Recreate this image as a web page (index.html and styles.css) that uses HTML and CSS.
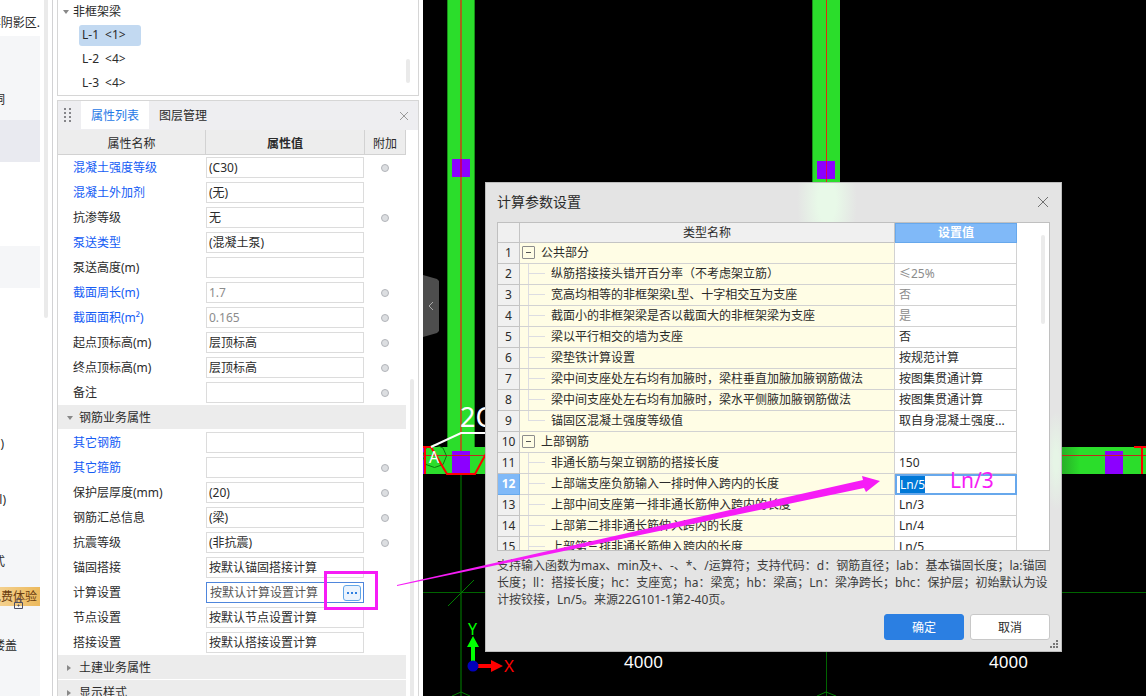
FILE: index.html
```html
<!DOCTYPE html>
<html lang="zh-CN">
<head>
<meta charset="utf-8">
<title>计算参数设置</title>
<link rel="stylesheet" href="styles.css">
</head>
<body>
<div class="app">
  <nav class="side" aria-label="导航">
    <div class="side-list">
      <div class="side-item side-head"><span>非阴影区.</span></div>
      <div class="side-item shade tail-5 tall"><span>洞</span></div>
      <div class="side-item active"></div>
      <div class="side-space"></div>
      <div class="side-item shade"></div>
      <div class="side-gap"></div>
      <div class="side-item tail-4"><span>)</span></div>
      <div class="side-item tail-6 apart"><span>l)</span></div>
      <div class="side-foot shade">
        <div class="side-item tail-5"><span>式</span></div>
        <div class="side-item badge-row">
          <span class="badge">免费体验</span>
          <svg class="lock" viewBox="0 0 10 12" aria-hidden="true"><path d="M3 4V2.500a2 2 0 0 1 4 0V4M.5 4.500h8v6h-8zM4.500 6.500v2M3.500 7.500h2" fill="none" stroke="#4b4f63"/></svg>
        </div>
        <div class="side-item tail-17"><span>楼盖</span></div>
      </div>
    </div>
    <div class="side-bar"></div>
  </nav>

  <main class="dock">
    <section class="tree">
      <div class="tree-parent"><span class="tri-down"></span>非框架梁</div>
      <button class="tree-node selected">L-1 <span>&lt;1&gt;</span></button>
      <button class="tree-node">L-2 <span>&lt;4&gt;</span></button>
      <button class="tree-node">L-3 <span>&lt;4&gt;</span></button>
      <div class="tree-thumb"></div>
    </section>

    <section class="props">
      <header class="tabs">
        <svg class="grip" viewBox="0 0 7 15" aria-hidden="true"><path d="M0 1h2M5 1h2M0 5h2M5 5h2M0 9h2M5 9h2M0 13h2M5 13h2" stroke="#85858a" stroke-width="2"/></svg>
        <button class="tab current">属性列表</button>
        <button class="tab">图层管理</button>
        <button class="close" aria-label="关闭"><svg viewBox="0 0 10 10"><path d="M1 1l8 8M9 1l-8 8" stroke="#999" stroke-width="1" fill="none"/></svg></button>
      </header>
      <div class="props-body">
        <table class="grid">
          <thead><tr><th class="c-name">属性名称</th><th class="c-value">属性值</th><th class="c-extra">附加</th></tr></thead>
          <tbody>
            <tr><td class="link"><label for="p1">混凝土强度等级</label></td><td><input id="p1" value="(C30)"></td><td><input type="checkbox" aria-label="附加"></td></tr>
            <tr><td class="link"><label for="p2">混凝土外加剂</label></td><td><input id="p2" value="(无)"></td><td></td></tr>
            <tr><td><label for="p3">抗渗等级</label></td><td><input id="p3" value="无"></td><td><input type="checkbox" aria-label="附加"></td></tr>
            <tr><td class="link"><label for="p4">泵送类型</label></td><td><input id="p4" value="(混凝土泵)"></td><td></td></tr>
            <tr><td><label for="p5">泵送高度(m)</label></td><td><input id="p5"></td><td></td></tr>
            <tr><td class="link"><label for="p6">截面周长(m)</label></td><td><input id="p6" class="muted" value="1.7" readonly></td><td><input type="checkbox" aria-label="附加"></td></tr>
            <tr><td class="link"><label for="p7">截面面积(m²)</label></td><td><input id="p7" class="muted" value="0.165" readonly></td><td><input type="checkbox" aria-label="附加"></td></tr>
            <tr><td><label for="p8">起点顶标高(m)</label></td><td><input id="p8" value="层顶标高"></td><td><input type="checkbox" aria-label="附加"></td></tr>
            <tr><td><label for="p9">终点顶标高(m)</label></td><td><input id="p9" value="层顶标高"></td><td><input type="checkbox" aria-label="附加"></td></tr>
            <tr><td><label for="p10">备注</label></td><td><input id="p10"></td><td><input type="checkbox" aria-label="附加"></td></tr>
            <tr class="section"><td colspan="3"><div><span class="tri-down small"></span>钢筋业务属性</div></td></tr>
            <tr><td class="link"><label for="q1">其它钢筋</label></td><td><input id="q1"></td><td></td></tr>
            <tr><td class="link"><label for="q2">其它箍筋</label></td><td><input id="q2"></td><td><input type="checkbox" aria-label="附加"></td></tr>
            <tr><td><label for="q3">保护层厚度(mm)</label></td><td><input id="q3" value="(20)"></td><td><input type="checkbox" aria-label="附加"></td></tr>
            <tr><td><label for="q4">钢筋汇总信息</label></td><td><input id="q4" value="(梁)"></td><td><input type="checkbox" aria-label="附加"></td></tr>
            <tr><td><label for="q5">抗震等级</label></td><td><input id="q5" value="(非抗震)"></td><td><input type="checkbox" aria-label="附加"></td></tr>
            <tr><td><label for="q6">锚固搭接</label></td><td><input id="q6" value="按默认锚固搭接计算"></td><td></td></tr>
            <tr><td><label for="q7">计算设置</label></td><td><div class="field"><input id="q7" value="按默认计算设置计算"><button class="more" aria-label="更多"><svg viewBox="0 0 16 14"><path d="M3 7h2M7 7h2M11 7h2" stroke="#2f7fe0" stroke-width="2"/></svg></button></div></td><td></td></tr>
            <tr><td><label for="q8">节点设置</label></td><td><input id="q8" value="按默认节点设置计算"></td><td></td></tr>
            <tr><td><label for="q9">搭接设置</label></td><td><input id="q9" value="按默认搭接设置计算"></td><td></td></tr>
            <tr class="section"><td colspan="3"><div><span class="tri-right"></span>土建业务属性</div></td></tr>
            <tr class="section"><td colspan="3"><div><span class="tri-right"></span>显示样式</div></td></tr>
          </tbody>
        </table>
        <div class="props-rail"><div class="props-thumb"></div></div>
      </div>
    </section>
  </main>

  <section class="canvas">
    <svg class="drawing" viewBox="423 0 723 696" preserveAspectRatio="xMinYMin slice" aria-label="平面图">
      <defs>
        <linearGradient id="fade"><stop offset="0" stop-color="#27aa27"/><stop offset="1" stop-color="#2bdd2b"/></linearGradient>
      </defs>
      <g fill="#2bdd2b">
        <rect x="447" y="0" width="28" height="474"/>
        <rect x="812" y="0" width="28" height="200"/>
        <rect x="423" y="447" width="70" height="27"/>
        <rect x="1078" y="447" width="68" height="27"/>
      </g>
      <rect x="1060" y="447" width="20" height="27" fill="url(#fade)"/>
      <path d="M447.500 0V447M474.500 0V447M812.500 0V190" stroke="#179017" fill="none"/>
      <g fill="#8c00ff">
        <rect x="452" y="159" width="18" height="18"/>
        <rect x="817" y="161" width="18" height="18"/>
        <rect x="452" y="451" width="18" height="23"/>
        <rect x="1105" y="451" width="18" height="23"/>
        <rect x="423" y="447" width="1" height="27"/>
      </g>
      <path d="M461 0V451" stroke="#a5651b" stroke-width="2"/>
      <path d="M461 159V177" stroke="#c00070" stroke-width="2"/>
      <path d="M826.500 0V190" stroke="#e02a10"/>
      <path d="M826.500 161V179" stroke="#e0005a" stroke-width="1"/>
      <path d="M423 455.500H490M1060 455.500H1146" stroke="#c3291a"/>
      <path d="M423 592.500H1146M826.500 640V696" stroke="#006400"/>
      <path d="M461 474V696" stroke="#004300" stroke-width="2"/>
      <path d="M448 606L474 580M452 696L461 692L470 696M817 696L826 692L836 696" stroke="#008000" fill="none"/>
      <path d="M434.500 444.500L443 448L446.500 456L443 464.500L434.500 467.500L426 464.500L422.500 456L426 448Z" fill="none" stroke="#0b7a0b"/>
      <path d="M425 447V474M423 447H431L447 474H475L488 450" fill="none" stroke="#f00" stroke-width="2"/>
      <path d="M1134 447H1146M1142 447V474" stroke="#f00" stroke-width="2"/>
      <path d="M490 433H461L431 447" fill="none" stroke="#fff" stroke-width="2"/>
      <g class="cad">
        <text x="460" y="427" class="cad-lg">2C</text>
        <text x="429" y="463" class="cad-md">A</text>
        <text x="624" y="668" class="cad-dim">4000</text>
        <text x="989" y="668" class="cad-dim">4000</text>
        <text x="468" y="635" class="cad-md axis-y">Y</text>
        <text x="504" y="672" class="cad-dim axis-x">X</text>
      </g>
      <path d="M471 661V647H467L473 636L479 647H475V661Z" fill="#0f0"/>
      <path d="M478 664H491V660L503 666L491 672V668H478Z" fill="#f00"/>
      <circle cx="473" cy="666" r="5.500" fill="#00b"/>
    </svg>
    <button class="collapse" aria-label="收起"><svg viewBox="0 0 6 8"><path d="M5 0L1 4l4 4" fill="none" stroke="#aaa"/></svg></button>

    <div class="dialog" role="dialog" aria-labelledby="dlg-title">
      <header class="dlg-head">
        <h1 id="dlg-title">计算参数设置</h1>
        <button class="close" aria-label="关闭"><svg viewBox="0 0 12 12"><path d="M1 1l10 10M11 1L1 11" stroke="#707070" fill="none"/></svg></button>
      </header>
      <div class="dlg-grid">
        <table class="params">
          <thead><tr><th class="n-col"></th><th>类型名称</th><th class="v-col">设置值</th></tr></thead>
          <tbody>
            <tr><th>1</th><td class="group"><div><button class="fold" aria-label="折叠"></button>公共部分</div></td><td></td></tr>
            <tr><th>2</th><td class="leaf"><div>纵筋搭接接头错开百分率（不考虑架立筋）</div></td><td class="muted">≤25%</td></tr>
            <tr><th>3</th><td class="leaf"><div>宽高均相等的非框架梁L型、十字相交互为支座</div></td><td class="muted">否</td></tr>
            <tr><th>4</th><td class="leaf"><div>截面小的非框架梁是否以截面大的非框架梁为支座</div></td><td class="muted">是</td></tr>
            <tr><th>5</th><td class="leaf"><div>梁以平行相交的墙为支座</div></td><td>否</td></tr>
            <tr><th>6</th><td class="leaf"><div>梁垫铁计算设置</div></td><td>按规范计算</td></tr>
            <tr><th>7</th><td class="leaf"><div>梁中间支座处左右均有加腋时，梁柱垂直加腋加腋钢筋做法</div></td><td>按图集贯通计算</td></tr>
            <tr><th>8</th><td class="leaf"><div>梁中间支座处左右均有加腋时，梁水平侧腋加腋钢筋做法</div></td><td>按图集贯通计算</td></tr>
            <tr><th>9</th><td class="leaf last"><div>锚固区混凝土强度等级值</div></td><td>取自身混凝土强度...</td></tr>
            <tr><th>10</th><td class="group"><div><button class="fold" aria-label="折叠"></button>上部钢筋</div></td><td></td></tr>
            <tr><th>11</th><td class="leaf"><div>非通长筋与架立钢筋的搭接长度</div></td><td>150</td></tr>
            <tr class="editing"><th>12</th><td class="leaf"><div><label for="edit">上部端支座负筋输入一排时伸入跨内的长度</label></div></td><td><input id="edit" value="Ln/5"></td></tr>
            <tr><th>13</th><td class="leaf"><div>上部中间支座第一排非通长筋伸入跨内的长度</div></td><td>Ln/3</td></tr>
            <tr><th>14</th><td class="leaf"><div>上部第二排非通长筋伸入跨内的长度</div></td><td>Ln/4</td></tr>
            <tr><th>15</th><td class="leaf"><div>上部第三排非通长筋伸入跨内的长度</div></td><td>Ln/5</td></tr>
          </tbody>
        </table>
        <div class="dlg-thumb"></div>
      </div>
      <p class="hint">支持输入函数为max、min及+、-、*、/运算符；支持代码：d：钢筋直径；lab：基本锚固长度；la:锚固<br>长度；ll：搭接长度；hc：支座宽；ha：梁宽；hb：梁高；Ln：梁净跨长；bhc：保护层；初始默认为设<br>计按铰接，Ln/5。来源22G101-1第2-40页。</p>
      <footer class="dlg-foot">
        <button class="btn primary">确定</button>
        <button class="btn">取消</button>
      </footer>
      <svg class="resize" viewBox="0 0 8 8" aria-hidden="true"><path d="M6 1h2M3 4h2M6 4h2M0 7h2M3 7h2M6 7h2" stroke="#777" stroke-width="2"/></svg>
    </div>
  </section>

  <svg class="notes" viewBox="0 0 1146 696" preserveAspectRatio="xMinYMin slice" aria-hidden="true">
    <path d="M324 571H378V610H324ZM327 574V607H375V574Z" fill="#f61cf6" fill-rule="evenodd"/>
    <path d="M397 585L863 480L862 476L880 481L866 492L864 488L397 586Z" fill="#f61cf6"/>
    <text x="950" y="488" class="note-text">Ln/3</text>
  </svg>
</div>
<script src="main.js"></script>
</body>
</html>
```

FILE: styles.css
```css
* { box-sizing: border-box; }

body {
  margin: 0;
  font: 12px/16px "Noto Sans", "Noto Sans CJK SC", sans-serif;
  color: #2b2b2b;
  background: #fff;
}

button, input { font: inherit; color: inherit; }
button { padding: 0; border: 0; background: none; }
input { outline: 0; }
svg { display: block; }

.app {
  position: relative;
  display: flex;
  height: 100vh;
  overflow: hidden;
}

/* Navigation strip */
.side {
  display: flex;
  justify-content: space-between;
  width: 53px;
  flex: none;
  padding-right: 4px;
  border-right: 1px solid #d2d2d4;
}
.side-list {
  display: flex;
  flex-direction: column;
  width: 40px;
}
.side-item {
  display: flex;
  align-items: center;
  justify-content: flex-end;
  flex: none;
  height: 42px;
  padding-top: 2px;
  overflow: hidden;
  white-space: nowrap;
}
.side-head { height: 36px; padding-top: 10px; }
.tall { height: 84px; padding-top: 44px; }
.shade { background: #f5f6f8; }
.active { background: #e9eaf0; }
.side-space { flex: none; height: 84px; }
.side-gap { flex: none; height: 134px; }
.apart { margin: 14px 0 20px; }
.tail-4 { padding-right: 36px; }
.tail-5 { padding-right: 35px; }
.tail-6 { padding-right: 34px; }
.tail-17 { padding-right: 23px; }
.side-foot { flex: 1; }
.badge-row {
  position: relative;
  align-items: flex-start;
  padding-top: 5px;
}
.badge {
  flex: none;
  height: 19px;
  padding: 2px 3px 0 0;
  color: #6b3d10;
  background: linear-gradient(90deg, #f6d79c, #ecb95c);
}
.lock {
  position: absolute;
  left: 14px;
  top: 16px;
  width: 10px;
  height: 12px;
}
.side-bar {
  width: 4px;
  height: 318px;
  border-radius: 0 0 2px 2px;
  background: #eaeaea;
}

/* Dock */
.dock {
  display: flex;
  flex-direction: column;
  gap: 4px;
  flex: none;
  width: 370px;
  padding: 0 4px;
}
.tree {
  position: relative;
  display: flex;
  flex-direction: column;
  align-items: flex-start;
  height: 96px;
  padding-left: 4px;
  border: 1px solid #d6d6d6;
  border-top: 0;
}
.tree-parent {
  display: flex;
  align-items: center;
  gap: 3px;
  height: 24px;
}
.tree-node {
  display: flex;
  align-items: center;
  gap: 6px;
  height: 24px;
  width: 62px;
  margin-left: 17px;
  padding-left: 3px;
  border-radius: 3px;
}
.tree-node.selected {
  height: 21px;
  margin-top: 1px;
  margin-bottom: 2px;
  background: #c2d9f1;
}
.tree-thumb {
  position: absolute;
  right: 8px;
  top: 59px;
  width: 4px;
  height: 24px;
  border-radius: 2px;
  background: #eaeaea;
}
.tri-down {
  border: 3px solid transparent;
  border-top: 4px solid #888;
  border-bottom: 0;
  margin-left: 1px;
  margin-right: 1px;
}
.tri-down.small { margin-left: 0; margin-right: 6px; }
.tri-right {
  border: 3px solid transparent;
  border-left: 4px solid #888;
  border-right: 0;
  margin-right: 8px;
}

.props {
  flex: 1;
  min-height: 0;
  display: flex;
  flex-direction: column;
  border: 1px solid #d6d6d6;
  border-bottom: 0;
}
.tabs {
  display: flex;
  align-items: center;
  flex: none;
  height: 29px;
  padding: 0 9px 0 6px;
  background: #eeeef1;
}
.grip { width: 7px; height: 15px; margin-right: 10px; }
.tab { height: 28px; padding: 2px 10px 0; align-self: flex-start; }
.tab.current { color: #1e78e6; background: #fff; }
.tabs .close { margin-left: auto; }
.tabs .close svg { width: 10px; height: 10px; }
.props-body { display: flex; flex: 1; min-height: 0; overflow: hidden; }

.grid {
  flex: 1;
  align-self: flex-start;
  border-collapse: separate;
  border-spacing: 0;
  table-layout: fixed;
}
.grid th {
  height: 25px;
  padding: 3px 0 0;
  font-weight: 400;
  background: #ededed;
  border-right: 1px solid #d2d2d2;
  border-bottom: 1px solid #d2d2d2;
}
.grid .c-name { width: 148px; }
.grid .c-value { font-weight: 700; }
.grid .c-extra { width: 41px; }
.grid td { height: 25px; padding: 0; vertical-align: middle; }
.grid td:first-child { padding-left: 15px; }
.grid td:last-child { padding-right: 2px; }
.grid .link { color: #145cf5; }
.grid label { display: block; }
.grid input:not([type]) {
  display: block;
  width: 158px;
  height: 21px;
  padding: 0 2px 1px;
  border: 1px solid #dcdcdc;
  background: #fff;
}
.grid input.muted, .muted { color: #8c8c8c; }
.grid input[type="checkbox"] {
  appearance: none;
  display: block;
  width: 8px;
  height: 8px;
  margin: 0 auto;
  border: 1px solid #b2b5ba;
  border-radius: 50%;
  background: #dcdee1;
}
.grid .section td { padding: 0; }
.section div {
  display: flex;
  align-items: center;
  height: 24px;
  margin-bottom: 1px;
  padding: 2px 0 0 9px;
  background: #ececec;
}
.field {
  display: flex;
  align-items: center;
  width: 158px;
  height: 21px;
  padding: 0 3px 0 1px;
  border: 1px solid #4f86dc;
}
.grid .field input:not([type]) {
  flex: 1;
  width: 0;
  height: 19px;
  border: 0;
  color: #555;
}
.more {
  width: 16px;
  height: 14px;
  border-radius: 2px;
  background: #eaf3fd;
  outline: 1px solid #62a6e8;
}
.props-rail { flex: none; width: 12px; padding: 249px 3px 0 4px; }
.props-thumb { width: 4px; height: 100%; border-radius: 2px 2px 0 0; background: #eaeaea; }

/* Drawing area */
.canvas {
  position: relative;
  flex: 1;
  min-width: 0;
  overflow: hidden;
  background: #000;
}
.drawing { width: 100%; height: 100%; }
.cad { fill: #fff; }
.cad-lg { font-size: 27px; }
.cad-md { font-size: 16px; }
.cad-dim { font-size: 17px; }
.axis-y { fill: #0f0; }
.axis-x { fill: #f00; }
.collapse {
  position: absolute;
  left: 0;
  top: 275px;
  width: 16px;
  height: 62px;
  padding-left: 5px;
  background: #4d4d4d;
  clip-path: polygon(0 0, 14px 4px, 100% 6px, 100% 56px, 14px 58px, 0 100%);
}
.collapse svg { width: 6px; height: 8px; }

/* Dialog window */
.dialog {
  position: absolute;
  left: 62px;
  top: 182px;
  display: flex;
  flex-direction: column;
  width: 577px;
  height: 470px;
  padding: 0 11px 11px;
  border: 1px solid #bdbdbd;
  background:
    radial-gradient(ellipse 30px 70px at 341px 18px, #e8f9e8 30%, rgba(228, 228, 228, 0)) no-repeat,
    radial-gradient(ellipse 12px 50px at 570px 278px, #e6f5e6 20%, rgba(228, 228, 228, 0)) no-repeat,
    #e4e4e4;
}
.dlg-head {
  display: flex;
  align-items: center;
  justify-content: space-between;
  flex: none;
  height: 39px;
  padding: 0 1px 2px 0;
}
.dlg-head h1 { margin: 0; font-size: 14px; font-weight: 400; }
.dlg-head .close svg { width: 12px; height: 12px; }
.dlg-grid {
  position: relative;
  flex: 1;
  min-height: 0;
  overflow: hidden;
  padding-right: 32px;
  border: 1px solid #c0c0c0;
  background: #fff;
}
.params {
  width: 100%;
  border-collapse: separate;
  border-spacing: 0;
  table-layout: fixed;
}
.params th, .params td {
  height: 21px;
  padding: 0;
  line-height: 20px;
  border-right: 1px solid #d2d2d2;
  border-bottom: 1px solid #d2d2d2;
  white-space: nowrap;
}
.params th { font-weight: 400; background: #f0f0f0; border-color: #c4c4c4; }
.params thead th { height: 20px; line-height: 19px; }
.params .n-col { width: 22px; }
.params .v-col {
  width: 122px;
  line-height: 18px;
  font-weight: 700;
  color: #fff;
  background: #80b9f8;
  border: 1px solid #67a8ec;
}
.params td:last-child { padding-left: 4px; }
.group, .leaf { background: #fffde5; }
.group div { display: flex; align-items: center; gap: 6px; padding-left: 2px; }
.fold {
  width: 13px;
  height: 13px;
  margin-bottom: 2px;
  border: 1px solid #8c8c8c;
  border-radius: 1px;
  background: linear-gradient(#555, #555) center / 5px 1px no-repeat;
}
.leaf div {
  padding-left: 31px;
  background:
    linear-gradient(#dddde2, #dddde2) 9px 9px / 16px 1px no-repeat,
    linear-gradient(#dddde2, #dddde2) 8px 0 / 1px 100% no-repeat;
}
.leaf.last div {
  background:
    linear-gradient(#dddde2, #dddde2) 9px 9px / 16px 1px no-repeat,
    linear-gradient(#dddde2, #dddde2) 8px 0 / 1px 10px no-repeat;
}
.editing th {
  font-weight: 700;
  color: #fff;
  background: #80b9f8;
  border-color: #67a8ec;
}
.params .editing td:last-child { padding: 0; border: 0; }
.editing input {
  display: block;
  width: 100%;
  height: 21px;
  padding: 0 3px 1px;
  border: 2px solid #67a8ec;
  background: #fff;
}
.editing input::selection { color: #fff; background: #0078d7; }
.dlg-thumb {
  position: absolute;
  right: 4px;
  top: 12px;
  width: 4px;
  height: 89px;
  border-radius: 2px;
  background: #ebebeb;
}
.hint {
  flex: none;
  margin: 6px -8px 6px 0;
  line-height: 17px;
  color: #3c3c3c;
  white-space: nowrap;
}
.dlg-foot {
  display: flex;
  justify-content: flex-end;
  gap: 6px;
  flex: none;
}
.btn {
  width: 80px;
  height: 26px;
  padding-top: 2px;
  border: 1px solid #c8c8c8;
  border-radius: 3px;
  background: #fff;
}
.btn.primary { color: #fff; border-color: #2b7fe2; background: #2b7fe2; }
.resize {
  position: absolute;
  right: 3px;
  bottom: 3px;
  width: 8px;
  height: 8px;
}

/* Annotations over the windows */
.notes {
  position: absolute;
  inset: 0;
  width: 100%;
  height: 100%;
  pointer-events: none;
}
.note-text { font-size: 21px; fill: #f61cf6; }
```

FILE: main.js
```js
const edit = document.getElementById("edit");
edit.focus({ preventScroll: true });
edit.select();
```
